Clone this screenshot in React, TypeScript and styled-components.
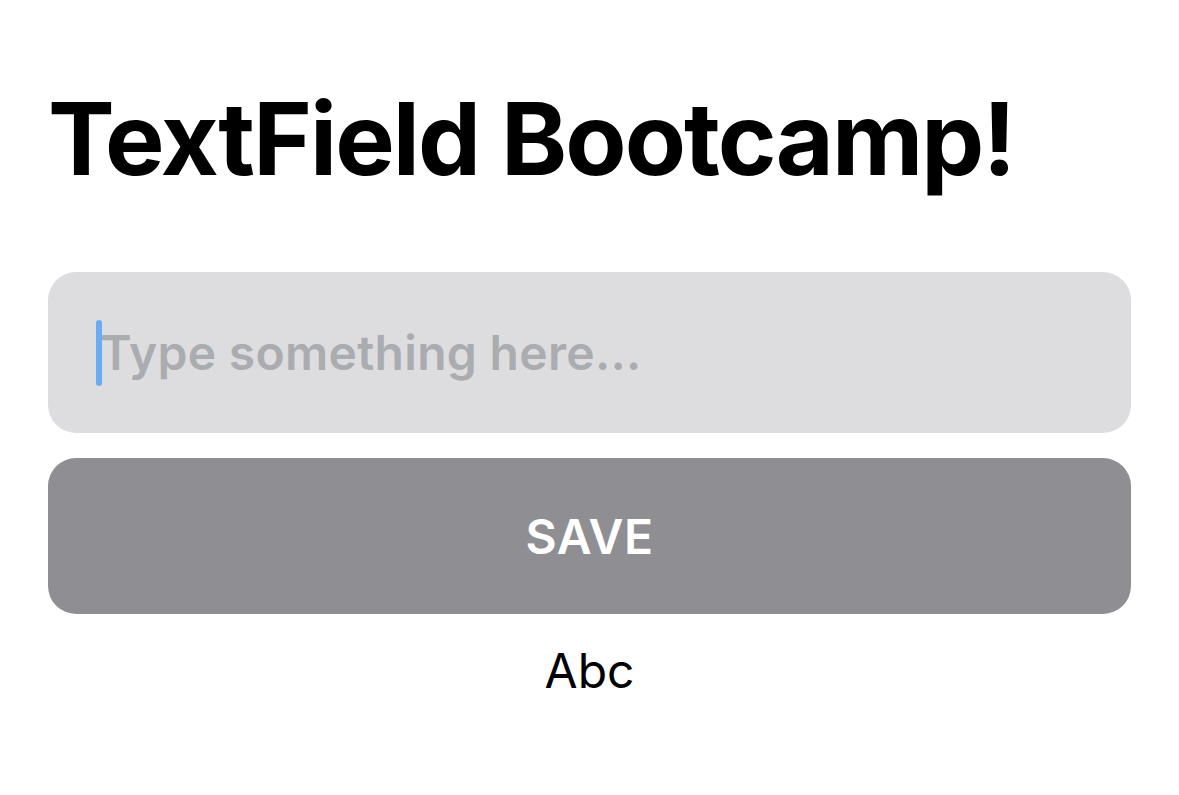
import { useState } from "react";
import styled, { createGlobalStyle } from "styled-components";

const GlobalStyle = createGlobalStyle`
  html, body {
    margin: 0;
    padding: 0;
    background: #ffffff;
    font-family: Inter, "Noto Sans", "Liberation Sans", sans-serif;
  }
`;

const Screen = styled.div`
  width: 1179px;
  height: 795px;
  box-sizing: border-box;
  padding: 78px 48px 0 48px;
  display: flex;
  flex-direction: column;
`;

const Title = styled.h1`
  margin: 0 0 73px 0;
  font-size: 100px;
  line-height: 121px;
  font-weight: 700;
  letter-spacing: -1.9px;
  color: #000000;
`;

const FieldWrap = styled.div`
  position: relative;
  height: 161px;
  border-radius: 28px;
  background: #dddde0;
  display: flex;
  align-items: center;
`;

const Input = styled.input`
  flex: 1;
  height: 100%;
  border: none;
  outline: none;
  background: transparent;
  padding: 0 0 0 52px;
  font-family: inherit;
  font-size: 48px;
  font-weight: 600;
  letter-spacing: 0.3px;
  color: #000000;
  caret-color: transparent;
  &::placeholder {
    color: #abacaf;
  }
`;

const Caret = styled.span`
  position: absolute;
  left: 48px;
  top: 48px;
  width: 6px;
  height: 66px;
  border-radius: 3px;
  background: #6aabf5;
`;

const SaveButton = styled.button`
  margin-top: 25px;
  height: 156px;
  border: none;
  border-radius: 28px;
  background: #8e8e93;
  color: #ffffff;
  font-family: inherit;
  font-size: 48px;
  font-weight: 600;
  letter-spacing: 0.5px;
  cursor: pointer;
`;

const Saved = styled.div`
  margin-top: 28px;
  text-align: center;
  font-size: 48px;
  line-height: 58px;
  font-weight: 400;
  color: #000000;
`;

export default function App() {
  const [text, setText] = useState("");
  const [saved, setSaved] = useState("Abc");

  return (
    <>
      <GlobalStyle />
      <Screen>
        <Title>TextField Bootcamp!</Title>
        <FieldWrap>
          <Caret />
          <Input
            value={text}
            placeholder="Type something here..."
            onChange={(e) => setText(e.target.value)}
          />
        </FieldWrap>
        <SaveButton onClick={() => text && setSaved(text)}>SAVE</SaveButton>
        <Saved>{saved}</Saved>
      </Screen>
    </>
  );
}
